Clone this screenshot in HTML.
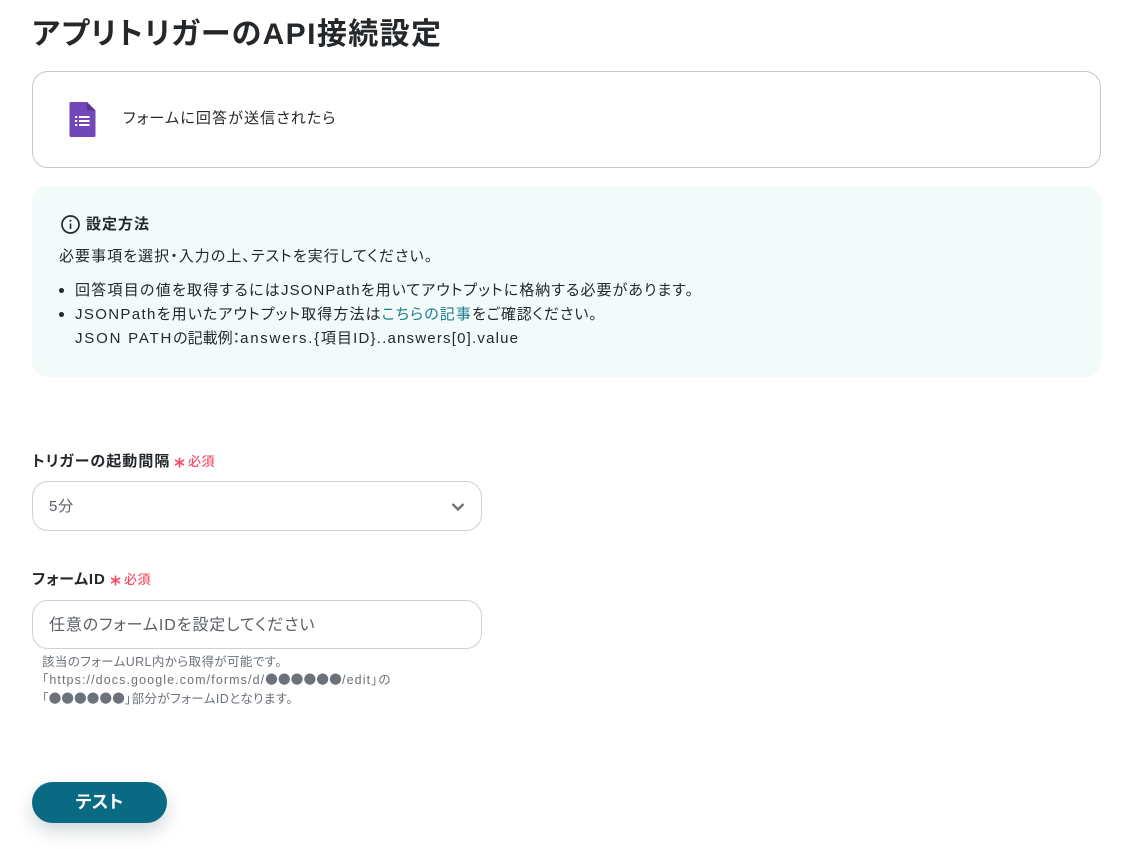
<!DOCTYPE html>
<html lang="ja">
<head>
<meta charset="utf-8">
<title>アプリトリガーのAPI接続設定</title>
<style>
html,body{margin:0;padding:0;background:#fff;width:1137px;height:849px;overflow:hidden}
body{position:relative;font-family:"Liberation Sans","Noto Sans CJK JP",sans-serif;color:#25282b;font-feature-settings:"palt"}
.a{position:absolute;white-space:nowrap;line-height:1}
.box{position:absolute;box-sizing:border-box}
.c{font-family:"Noto Sans CJK JP",sans-serif;line-height:0}
</style>
</head>
<body>
<div class="a" style="left:32px;top:16px;font-size:30px;line-height:38px;font-weight:700;letter-spacing:1.4px;color:#25282b">アプリトリガーのAPI接続設定</div>

<div class="box" style="left:32px;top:71px;width:1069px;height:97px;border:1px solid #c8c8c8;border-radius:16px"></div>
<svg class="a" style="left:69px;top:102px" width="27" height="35" viewBox="0 0 27 35">
<path d="M2 0H18L26.500 8.500V33.500Q26.500 35 25 35H2Q.5 35 .5 33.500V1.500Q.5 0 2 0Z" fill="#7248b9"/>
<path d="M18 0L26.500 8.500H18Z" fill="#58368f"/>
<g fill="#fff"><rect x="6" y="14" width="2.200" height="2"/><rect x="6" y="18" width="2.200" height="2"/><rect x="6" y="22" width="2.200" height="2"/><rect x="10" y="14" width="10.500" height="2"/><rect x="10" y="18" width="10.500" height="2"/><rect x="10" y="22" width="10.500" height="2"/></g>
</svg>
<div class="a" style="left:123px;top:109px;font-size:15px;line-height:20px;letter-spacing:1.15px">フォームに回答が送信されたら</div>

<div class="box" style="left:32px;top:186px;width:1069px;height:191px;background:#f2fafa;border-radius:16px"></div>
<svg class="a" style="left:60px;top:214px" width="21" height="21" viewBox="0 0 21 21" fill="none" stroke="#25282b">
<circle cx="10.500" cy="10.500" r="8.500" stroke-width="1.700"/>
<path d="M10.500 9.500V15" stroke-width="1.600"/>
<circle cx="10.500" cy="6.700" r="1" fill="#25282b" stroke="none"/>
</svg>
<div class="a" style="left:86px;top:215px;font-size:15px;line-height:20px;font-weight:700;letter-spacing:1px">設定方法</div>
<div class="a" style="left:59px;top:247px;font-size:15px;line-height:20px;letter-spacing:1.05px">必要事項を選択・入力の上、テストを実行してください。</div>
<div class="a" style="left:59px;top:288px;width:5px;height:5px;border-radius:50%;background:#25282b"></div>
<div class="a" style="left:59px;top:312px;width:5px;height:5px;border-radius:50%;background:#25282b"></div>
<div class="a" style="left:75px;top:281px;font-size:15px;line-height:20px;letter-spacing:1.05px"><span style="letter-spacing:1.25px">回答項目の値を取得するには</span><span style="letter-spacing:1.1px">JSONPath</span>を用いてアウトプットに格納する必要があります。</div>
<div class="a" style="left:75px;top:305px;font-size:15px;line-height:20px;letter-spacing:1.1px"><span style="letter-spacing:1.35px">JSONPath</span>を用いたアウトプット取得方法は<span style="color:#1a7c8c">こちらの記事</span><span style="letter-spacing:.9px">をご確認ください。</span></div>
<div class="a" style="left:75px;top:329px;font-size:15px;line-height:20px;letter-spacing:1.1px"><span style="letter-spacing:1.8px">JSON PATH</span><span style="letter-spacing:0">の記載例：</span><span style="letter-spacing:1.75px">answers.{</span>項目<span style="letter-spacing:1.2px">ID}..answers[0].value</span></div>

<div class="a" style="left:32px;top:452px;font-size:15px;line-height:20px;font-weight:700;letter-spacing:1.05px">トリガーの起動間隔</div>
<svg class="a" style="left:174px;top:457px" width="11" height="11" viewBox="0 0 11 11" fill="none" stroke="#f5506a" stroke-width="1.700"><path d="M5.500 .5V10.500M1 3L10 8M10 3L1 8"/></svg>
<div class="a" style="left:188px;top:453px;font-size:13px;line-height:17px;font-weight:500;color:#f5506a;letter-spacing:.5px">必須</div>
<div class="box" style="left:32px;top:481px;width:450px;height:50px;border:1px solid #cfd0d8;border-radius:16px"></div>
<div class="a" style="left:49px;top:497px;font-size:15px;line-height:20px;color:#5b6066;letter-spacing:.8px">5分</div>
<svg class="a" style="left:451px;top:502px" width="14" height="10" viewBox="0 0 14 10" fill="none" stroke="#6d6f73" stroke-width="2.300"><path d="M1.500 2L7 7.500L12.500 2"/></svg>

<div class="a" style="left:32px;top:570px;font-size:15px;line-height:20px;font-weight:700;letter-spacing:.85px">フォームID</div>
<svg class="a" style="left:110px;top:575px" width="11" height="11" viewBox="0 0 11 11" fill="none" stroke="#f5506a" stroke-width="1.700"><path d="M5.500 .5V10.500M1 3L10 8M10 3L1 8"/></svg>
<div class="a" style="left:124px;top:571px;font-size:13px;line-height:17px;font-weight:500;color:#f5506a;letter-spacing:.5px">必須</div>
<div class="box" style="left:32px;top:600px;width:450px;height:49px;border:1px solid #cfd0d8;border-radius:16px"></div>
<div class="a" style="left:49px;top:616px;font-size:16px;line-height:20px;color:#5b6066;letter-spacing:.9px">任意のフォームIDを設定してください</div>

<div class="a" style="left:42px;top:653px;font-size:12.500px;line-height:19px;color:#6c727a;letter-spacing:.4px">該当のフォームURL内から取得が可能です。</div>
<div class="a" style="left:42px;top:671px;font-size:12.500px;line-height:19px;color:#6c727a;letter-spacing:1.1px">「https://docs.google.com/forms/d/<span class="c" style="letter-spacing:.3px">●●●●●●</span>/edit」の</div>
<div class="a" style="left:42px;top:690px;font-size:12.500px;line-height:19px;color:#6c727a;letter-spacing:.45px">「<span class="c" style="letter-spacing:.2px">●●●●●●</span>」部分がフォームIDとなります。</div>

<div class="box" style="left:32px;top:782px;width:135px;height:41px;border-radius:21px;background:#0a6a84;box-shadow:0 8px 18px rgba(30,60,80,.2)"></div>
<div class="a" style="left:32px;top:791px;width:135px;text-align:center;font-size:17.500px;line-height:22px;font-weight:700;color:#fff;letter-spacing:.2px">テスト</div>
</body>
</html>
